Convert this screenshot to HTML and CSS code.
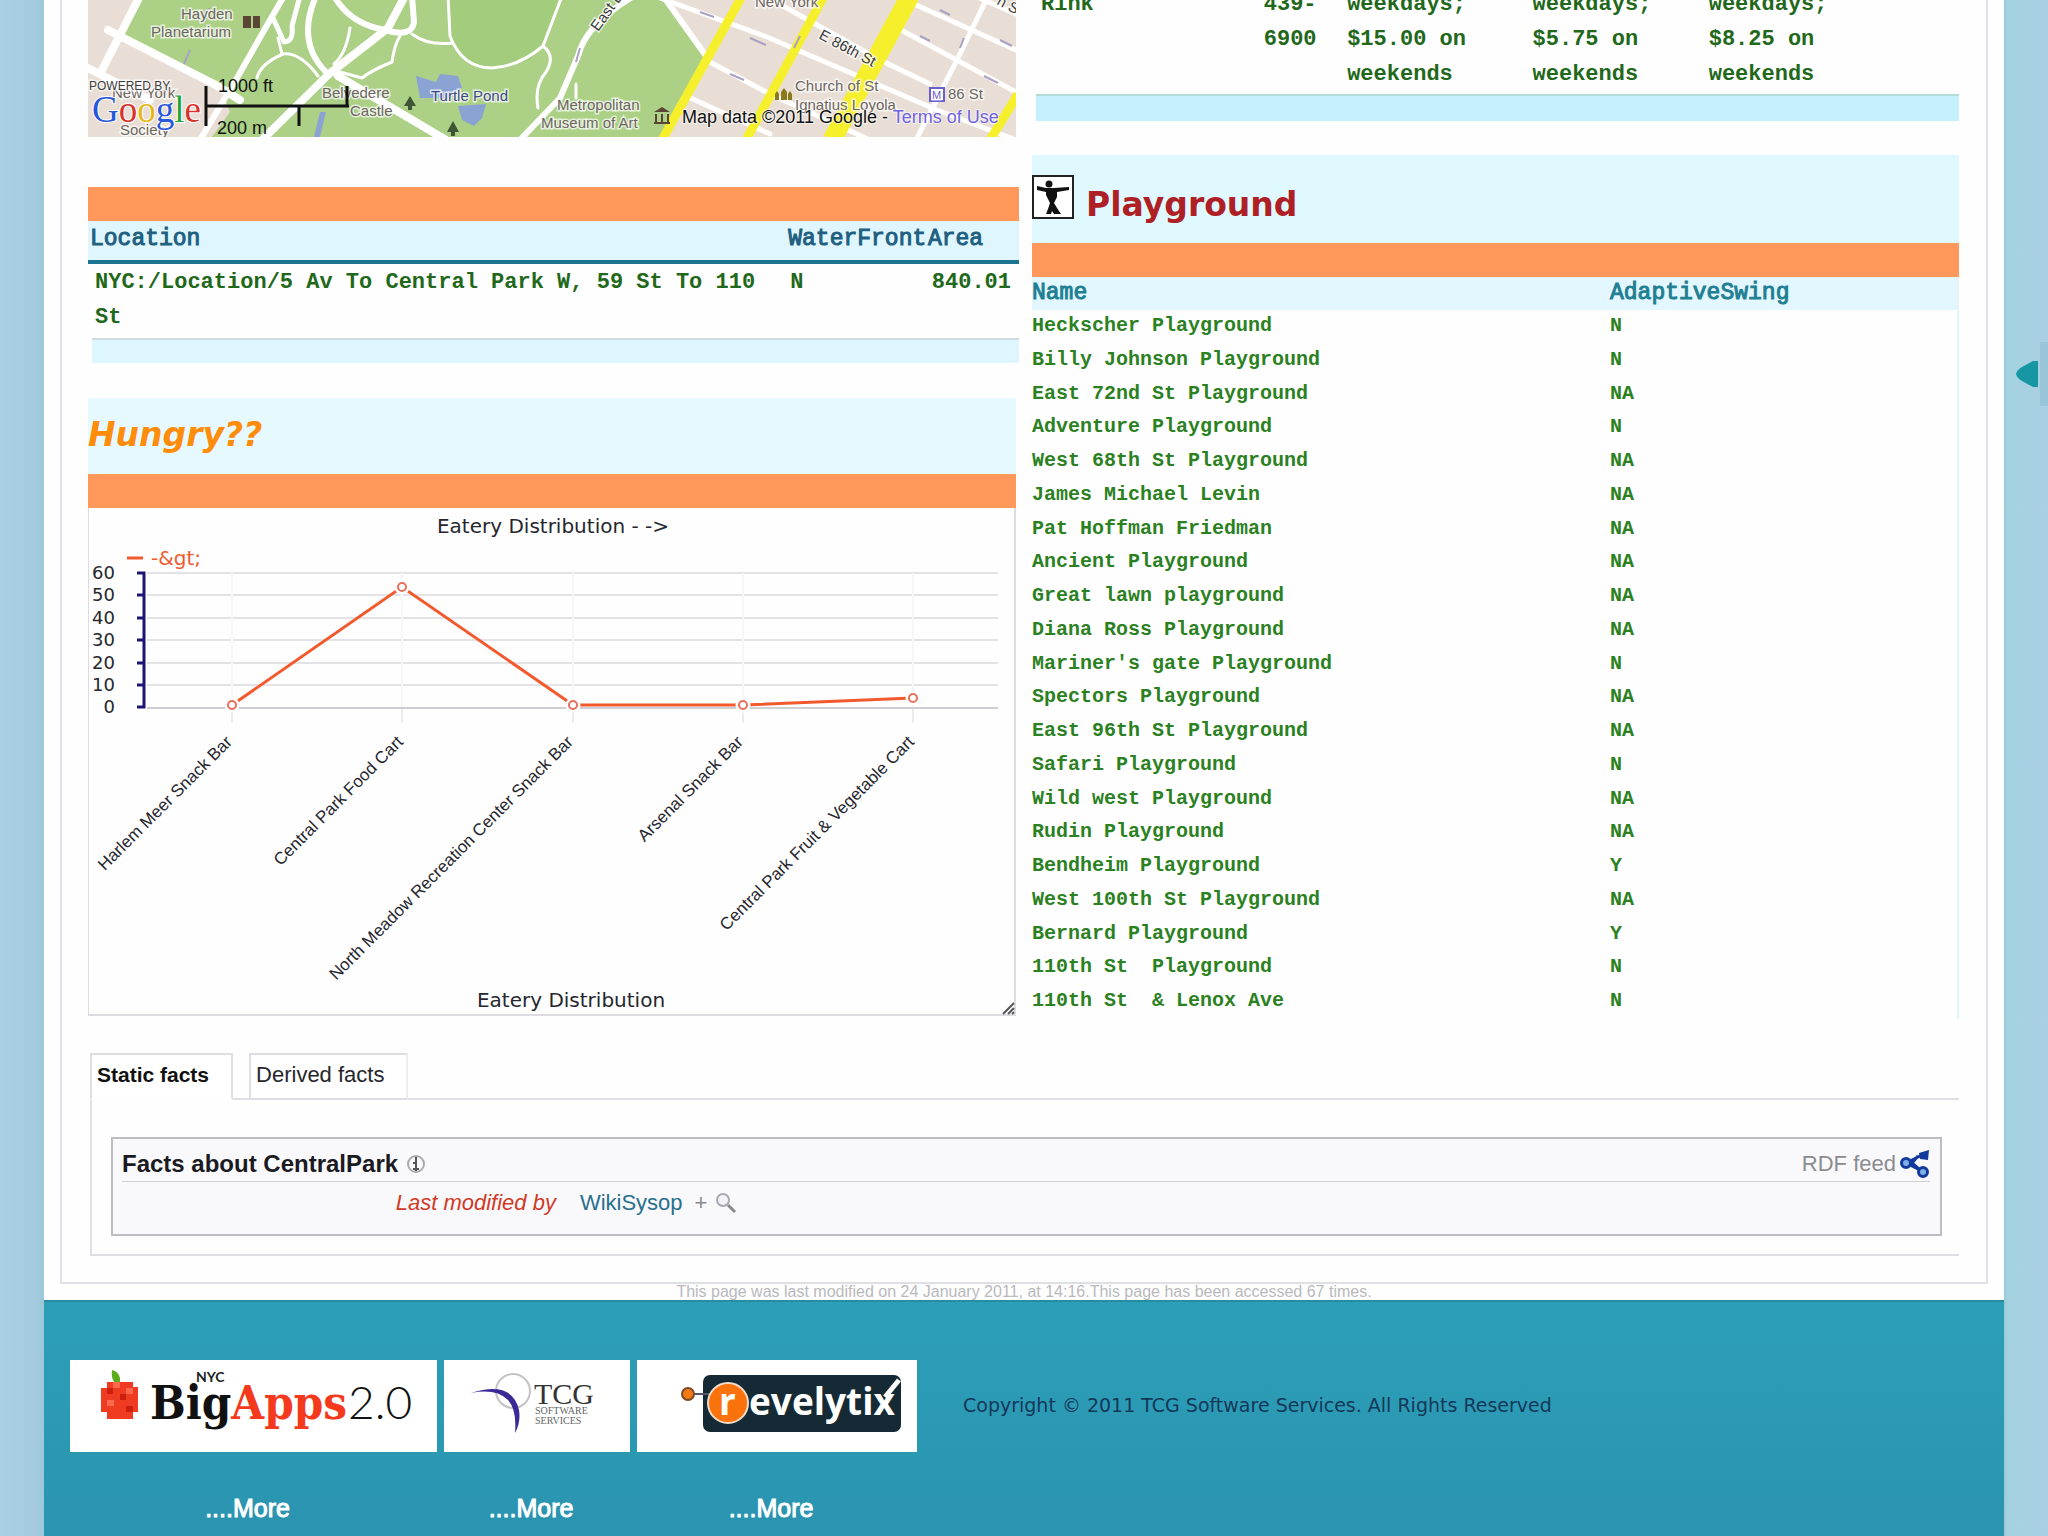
FILE: index.html
```html
<!DOCTYPE html>
<html lang="en">
<head>
<meta charset="utf-8">
<title>CentralPark</title>
<link rel="stylesheet" href="styles.css">
</head>
<body>
<button class="side-toggle" type="button" aria-label="Open side panel">
  <svg width="24" height="28" viewBox="0 0 24 28"><path d="M0 14 Q1 10 6 7 L17 1 H22 V27 H17 L6 21 Q1 18 0 14Z" fill="#1797a3"/></svg>
</button>
<div class="page">
  <main class="frame">
    <div class="columns">
      <div class="col-left">
        <svg class="map" viewBox="88 0 928 137" role="img" aria-label="Map of Central Park">
          <rect x="88" width="928" height="137" fill="#e8ded5"/>
          <path d="M137 0 L116 34 L222 90 L230 112 L212 137 H664 L710 56 L664 0Z" fill="#abd086"/>
          <path d="M448 0 L452 42 L472 66 H505 L530 60 L545 42 L558 0Z" fill="#a3cd7c"/>
          <path d="M416 76 L436 82 L440 74 L458 76 L462 88 L450 98 L420 98Z M458 106 L486 104 L482 118 L474 126 L462 120Z M314 137 L320 112 L326 112 L320 137Z" fill="#8ba3d3"/>
          <g fill="none" stroke="#fff" stroke-linecap="round" stroke-linejoin="round">
            <path stroke-width="8" d="M140 -4 L102 70 M108 30 L214 84 L240 100 M88 68 L150 100 M405 -4 L388 28 L329 74 L262 140 M338 76 L446 140"/>
            <path stroke-width="6" d="M284 -4 L262 34 L237 78 L200 140 M316 -4 Q296 42 326 72 M334 -4 Q350 24 385 30 Q412 38 414 22 L412 -4 M634 -4 Q586 24 578 56 L560 98 L520 140 M666 0 L706 56"/>
            <path stroke-width="5" d="M272 16 L284 42 Q294 42 292 26 L300 -4"/>
            <path stroke-width="3" d="M412 34 Q428 46 453 43 M448 -4 L450 36 Q462 68 492 68 Q520 66 543 46 L562 -4 M543 46 Q556 56 546 72 Q534 86 538 108 M257 78 Q260 64 283 54 Q300 52 318 76 M350 28 Q346 54 334 64 M400 36 Q394 46 392 62 Q372 70 362 78 L340 72 M576 98 V84 M282 54 L278 38"/>
            <path stroke-width="5" d="M660 -2 L767 37 L937 110 L1016 140 M706 60 L770 94 L870 140 M765 -4 L880 60 L930 84 M890 24 L1016 92 M905 0 L1016 50 M975 -4 L1016 14 M686 96 L770 134"/>
            <path stroke-width="5" d="M988 -4 L958 58 L918 136"/>
          </g>
          <g fill="none" stroke="#f6f02c">
            <path stroke-width="9" d="M742 -4 L662 140 M824 -4 L746 140 M1018 94 L990 140"/>
            <path stroke-width="19" d="M910 -4 L832 140"/>
          </g>
          <g fill="none" stroke="#a9a2c4" stroke-width="2">
            <path d="M209 8 l-5 14 M190 50 l-6 14 M580 48 l-4 14 M700 12 l14 5 M750 38 l16 7 M730 74 l14 6 M920 36 l10 5 M940 10 l10 5 M800 36 l-6 12 M964 38 l-4 10 M984 76 l14 7 M1000 40 l12 6"/>
          </g>
          <g fill="#3f5636"><path d="M410 96 l6 10 h-4 v4 h-4 v-4 h-4z M453 121 l6 11 h-4 v4 h-4 v-4 h-4z"/></g>
          <g fill="#5b4636"><path d="M243 16 h8 v12 h-8z M253 16 h7 v12 h-7z"/><path d="M654 112 l8 -5 l8 5z M655 114 h2 v8 h-2z M661 114 h2 v8 h-2z M667 114 h2 v8 h-2z M654 122 h16 v2 h-16z"/></g>
          <path d="M775 100 v-6 l2 -3 l2 3 v6z M781 100 v-8 l3 -4 l3 4 v8z M788 100 v-6 l2 -3 l2 3 v6z" fill="#8a7a1a"/>
          <path d="M930 88 h14 v13 h-14z" fill="#fff" stroke="#6a5fd0" stroke-width="2"/>
          <text class="m-label m-blue" x="932" y="99" font-size="11">M</text>
          <g class="m-label" font-size="15">
            <text x="181" y="19">Hayden</text><text x="151" y="37">Planetarium</text>
            <text x="322" y="98">Belvedere</text><text x="350" y="116">Castle</text>
            <text class="m-navy" x="431" y="101">Turtle Pond</text>
            <text x="557" y="110">Metropolitan</text><text x="541" y="128">Museum of Art</text>
            <text x="755" y="7">New York</text>
            <text x="795" y="91">Church of St</text><text x="795" y="110">Ignatius Loyola</text>
            <text x="948" y="99">86 St</text>
            <text x="112" y="98">New York</text><text x="120" y="135">Society</text>
            <text class="m-dark" transform="translate(818 38) rotate(28)">E 86th St</text>
            <text class="m-dark" transform="translate(598 32) rotate(-54)">East Dr</text>
            <text class="m-dark" transform="translate(996 4) rotate(28)">h St</text>
          </g>
          <text class="m-label m-dark" x="89" y="90" font-size="12">POWERED BY</text>
          <g class="m-google"><text x="92" y="122"><tspan fill="#2b57d9">G</tspan><tspan fill="#d8332b">o</tspan><tspan fill="#e5b91c">o</tspan><tspan fill="#2b57d9">g</tspan><tspan fill="#26a337">l</tspan><tspan fill="#d8332b">e</tspan></text></g>
          <path d="M206 86 V126 M206 106 H349 M347 86 V106 M299 106 V126" fill="none" stroke="#111" stroke-width="3"/>
          <g class="m-scale"><text x="218" y="92">1000 ft</text><text x="217" y="134">200 m</text></g>
          <g class="m-credit"><text x="682" y="123">Map data ©2011 Google - <tspan fill="#7064e0">Terms of Use</tspan></text></g>
        </svg>

        <section class="block location">
          <div class="bar"></div>
          <table class="data location-table">
            <colgroup><col class="c-loc"><col class="c-water"><col></colgroup>
            <thead><tr><th>Location</th><th>WaterFront</th><th>Area</th></tr></thead>
            <tbody><tr><td>NYC:/Location/5 Av To Central Park W, 59 St To 110 St</td><td>N</td><td class="num">840.01</td></tr></tbody>
          </table>
          <div class="band"></div>
        </section>

        <section class="hungry">
          <h2 class="hungry-title">Hungry??</h2>
          <div class="bar"></div>
          <svg class="chart" viewBox="88 507 928 508" role="img" aria-label="Eatery Distribution">
            <path d="M88 507 V1014 H1015 V507" fill="none" stroke="#dcdce2" stroke-width="2"/>
            <g stroke="#e3e3e6" stroke-width="2">
              <path d="M147 572 H998 M147 594 H998 M147 617 H998 M147 639 H998 M147 662 H998 M147 684 H998"/>
              <path d="M232 707 V722 M402 707 V722 M573 707 V722 M743 707 V722 M913 707 V722" stroke="#ececef"/>
              <path d="M232 572 V707 M402 572 V707 M573 572 V707 M743 572 V707 M913 572 V707" stroke="#f8f6f7"/>
              <path d="M147 707 H998" stroke="#cfcfd3"/>
            </g>
            <path d="M137 572 H144 V706 H137 M137 594 H144 M137 617 H144 M137 639 H144 M137 662 H144 M137 684 H144" fill="none" stroke="#1c1577" stroke-width="3"/>
            <path d="M232 704 L402 586 L573 704 L743 704 L913 697" fill="none" stroke="#f25a2e" stroke-width="3"/>
            <path d="M127 557 H143" stroke="#f25a2e" stroke-width="3"/>
            <g fill="#fff" stroke="#fff" stroke-width="5"><circle cx="232" cy="704" r="5"/><circle cx="402" cy="586" r="5"/><circle cx="573" cy="704" r="5"/><circle cx="743" cy="704" r="5"/><circle cx="913" cy="697" r="5"/></g>
            <g fill="#fff" stroke="#e8705a" stroke-width="2"><circle cx="232" cy="704" r="4"/><circle cx="402" cy="586" r="4"/><circle cx="573" cy="704" r="4"/><circle cx="743" cy="704" r="4"/><circle cx="913" cy="697" r="4"/></g>
            <g class="ch-title" text-anchor="middle"><text x="553" y="532">Eatery Distribution - -&gt;</text><text x="571" y="1006">Eatery Distribution</text></g>
            <text class="ch-legend" x="151" y="564">-&amp;gt;</text>
            <g class="ch-axis" text-anchor="end">
              <text x="115" y="578">60</text><text x="115" y="600">50</text><text x="115" y="623">40</text><text x="115" y="645">30</text><text x="115" y="668">20</text><text x="115" y="690">10</text><text x="115" y="712">0</text>
            </g>
            <g class="ch-names" text-anchor="end">
              <text transform="translate(233 742) rotate(-45)">Harlem Meer Snack Bar</text>
              <text transform="translate(404 742) rotate(-45)">Central Park Food Cart</text>
              <text transform="translate(574 742) rotate(-45)">North Meadow Recreation Center Snack Bar</text>
              <text transform="translate(744 742) rotate(-45)">Arsenal Snack Bar</text>
              <text transform="translate(915 742) rotate(-45)">Central Park Fruit &amp; Vegetable Cart</text>
            </g>
            <path d="M1003 1013 L1014 1002 M1008 1013 L1014 1007 M1012 1013 L1014 1011" stroke="#555" stroke-width="2"/>
          </svg>
        </section>
      </div>

      <div class="col-right">
        <section class="rinks">
          <table class="data rink-table">
            <colgroup><col class="c-rink"><col class="c-phone"><col class="c-fee"><col class="c-fee2"><col></colgroup>
            <tbody><tr><td>Rink</td><td>439-<br>6900</td><td>weekdays;<br>$15.00 on<br>weekends</td><td>weekdays;<br>$5.75 on<br>weekends</td><td>weekdays;<br>$8.25 on<br>weekends</td></tr></tbody>
          </table>
          <div class="band band-strong"></div>
        </section>

        <section class="playground">
          <h2 class="play-title">
            <svg width="42" height="44" viewBox="0 0 42 44" aria-hidden="true"><rect x="1" y="1" width="40" height="42" fill="#fff" stroke="#222" stroke-width="2"/><circle cx="17" cy="9" r="3.5" fill="#111"/><path d="M5 11 L14 13 L22 13 L37 12 V15 L25 17 L25 22 L22 28 L25 33 L29 39 H22 L20 36 L19 39 H14 L16 34 L18 28 L14 20 L14 17 L5 15Z" fill="#111"/></svg>
            <span>Playground</span>
          </h2>
          <div class="bar"></div>
          <table class="play-table">
            <colgroup><col class="c-name"><col></colgroup>
            <thead><tr><th>Name</th><th>AdaptiveSwing</th></tr></thead>
            <tbody>
              <tr><td>Heckscher Playground</td><td>N</td></tr>
              <tr><td>Billy Johnson Playground</td><td>N</td></tr>
              <tr><td>East 72nd St Playground</td><td>NA</td></tr>
              <tr><td>Adventure Playground</td><td>N</td></tr>
              <tr><td>West 68th St Playground</td><td>NA</td></tr>
              <tr><td>James Michael Levin</td><td>NA</td></tr>
              <tr><td>Pat Hoffman Friedman</td><td>NA</td></tr>
              <tr><td>Ancient Playground</td><td>NA</td></tr>
              <tr><td>Great lawn playground</td><td>NA</td></tr>
              <tr><td>Diana Ross Playground</td><td>NA</td></tr>
              <tr><td>Mariner's gate Playground</td><td>N</td></tr>
              <tr><td>Spectors Playground</td><td>NA</td></tr>
              <tr><td>East 96th St Playground</td><td>NA</td></tr>
              <tr><td>Safari Playground</td><td>N</td></tr>
              <tr><td>Wild west Playground</td><td>NA</td></tr>
              <tr><td>Rudin Playground</td><td>NA</td></tr>
              <tr><td>Bendheim Playground</td><td>Y</td></tr>
              <tr><td>West 100th St Playground</td><td>NA</td></tr>
              <tr><td>Bernard Playground</td><td>Y</td></tr>
              <tr><td>110th St&nbsp; Playground</td><td>N</td></tr>
              <tr><td>110th St&nbsp; &amp; Lenox Ave</td><td>N</td></tr>
            </tbody>
          </table>
        </section>
      </div>
    </div>

    <section class="facts">
      <div class="tabs" role="tablist">
        <button class="tab tab-on" type="button" role="tab" aria-selected="true">Static facts</button>
        <span class="tab-gap"></span>
        <button class="tab tab-off" type="button" role="tab" aria-selected="false">Derived facts</button>
        <span class="tab-rest"></span>
      </div>
      <div class="panel">
        <div class="factbox">
          <div class="fact-head">
            <h3>Facts about CentralPark</h3>
            <svg width="20" height="20" viewBox="0 0 20 20" aria-hidden="true"><circle cx="10" cy="10" r="8" fill="none" stroke="#aaa" stroke-width="2"/><path d="M10 3 V17 M7 9 H10 M7 15 H13" stroke="#555" stroke-width="2"/></svg>
            <a class="rdf" href="#rdf">RDF feed
              <svg width="30" height="28" viewBox="0 0 30 28" aria-hidden="true"><path d="M6 13 L24 4 M6 13 L24 22 M18 6 L12 13 L20 20" fill="none" stroke="#123a9c" stroke-width="3"/><circle cx="6" cy="13" r="4.5" fill="#7fb0e8" stroke="#123a9c" stroke-width="3"/><path d="M19 3 L29 0 L28 10 L20 9Z" fill="#123a9c"/><circle cx="23" cy="22" r="4.5" fill="#7fb0e8" stroke="#123a9c" stroke-width="3"/></svg>
            </a>
          </div>
          <div class="fact-row">
            <span class="fact-key">Last modified by</span>
            <a class="fact-val" href="#user">WikiSysop</a>
            <span class="plus">+</span>
            <svg width="22" height="22" viewBox="0 0 22 22" aria-hidden="true"><circle cx="8" cy="8" r="6" fill="#f4f4f8" stroke="#a9a9b4" stroke-width="2"/><path d="M13 13 L20 20" stroke="#888" stroke-width="3"/></svg>
          </div>
        </div>
      </div>
    </section>
  </main>
  <p class="modified">This page was last modified on 24 January 2011, at 14:16.This page has been accessed 67 times.</p>

  <footer class="footer">
    <div class="sponsor sponsor-big">
      <a class="logo" href="#bigapps" aria-label="NYC BigApps 2.0">
        <svg width="367" height="92" viewBox="70 1360 367 92">
          <path d="M112 1370 q6 1 8 8 v4 h-6 q-3 -5 -2 -12z" fill="#5cad1c"/>
          <path d="M107 1382 H133 V1387 H138 V1412 H133 V1419 H107 V1412 H101 V1388 H107Z" fill="#ee3b22"/>
          <path d="M113 1382 h7 v6 h-7z M126 1388 h7 v6 h-7z M107 1400 h7 v6 h-7z" fill="#f9694c"/><path d="M120 1394 h6 v6 h-6z M126 1406 h7 v6 h-7z M107 1388 h6 v6 h-6z" fill="#cc1f10"/>
          <text class="lg-slab" x="150" y="1419">Big<tspan fill="#f5391c">Apps</tspan></text>
          <text class="lg-nyc" x="196" y="1382">NYC</text>
          <text class="lg-two" x="348" y="1419">2.0</text>
        </svg>
      </a>
      <a class="more" href="#more1">....More</a>
    </div>
    <div class="sponsor">
      <a class="logo" href="#tcg" aria-label="TCG Software Services">
        <svg width="186" height="92" viewBox="444 1360 186 92">
          <circle cx="513" cy="1391" r="17" fill="none" stroke="#c3c3c8" stroke-width="2"/>
          <path d="M471 1393 Q512 1380 519 1410 Q521 1422 515 1433 Q517 1410 508 1400 Q496 1388 471 1393Z" fill="#3b2a96"/>
          <text class="lg-tcg" x="534" y="1404">TCG</text>
          <text class="lg-soft" x="535" y="1414">SOFTWARE</text><text class="lg-soft" x="535" y="1424">SERVICES</text>
        </svg>
      </a>
      <a class="more" href="#more2">....More</a>
    </div>
    <div class="sponsor">
      <a class="logo" href="#revelytix" aria-label="revelytix">
        <svg width="280" height="92" viewBox="636 1360 280 92">
          <rect x="702" y="1375" width="198" height="57" rx="7" fill="#152a35"/>
          <path d="M692 1394 H714" stroke="#556" stroke-width="2"/>
          <circle cx="687" cy="1394" r="6" fill="#f47a16" stroke="#7a4a28" stroke-width="2"/>
          <circle cx="727" cy="1403" r="20" fill="#f9720c" stroke="#f2dccb" stroke-width="2"/>
          <text class="lg-rev" x="718" y="1415">r</text>
          <text class="lg-rev" x="748" y="1415">evelytix</text>
          <path d="M884 1397 L898 1380" stroke="#fff" stroke-width="5"/>
        </svg>
      </a>
      <a class="more" href="#more3">....More</a>
    </div>
    <p class="copyright">Copyright © 2011 TCG Software Services. All Rights Reserved</p>
  </footer>
</div>
</body>
</html>
```
FILE: styles.css
```css
* { box-sizing: border-box; }
body {
  margin: 0;
  background: linear-gradient(to right, #abd0e4 0, #a6cbdf 32px, #9cc8da 44px, #9cc8da calc(100% - 44px), #a4d2e1 calc(100% - 40px), #aacfe2 100%);
  font-family: "Liberation Sans", Arial, sans-serif;
  font-size: 22px;
  color: #1b1b1f;
}
h2, h3, p { margin: 0; }
a { text-decoration: none; color: inherit; }
svg { display: block; }

.page { margin: 0 44px; background: #fefefe; }
.frame { margin: 0 16px; padding: 0 27px 26px 26px; border: solid #dfe0e6; border-width: 0 2px 2px; }
.columns { display: grid; grid-template-columns: 931fr 927fr; column-gap: 13px; overflow: hidden; }
.col-left, .col-right { min-width: 0; }

.bar { height: 34px; background: #ff985a; }
.band { height: 25px; margin-left: 4px; background: #def6ff; border-top: 2px solid #cfdde0; }
.band-strong { height: 27px; background: #c6f0fd; border-top-color: #b4dcd6; }

.map { width: 928px; max-width: 100%; height: auto; }
.map text { font-family: "Liberation Sans", Arial, sans-serif; }
.m-label { fill: #6d6660; stroke: #fff; stroke-width: 3px; stroke-opacity: .7; paint-order: stroke; }
.m-label .m-dark, .m-dark { fill: #3c3c3c; }
.m-label .m-navy { fill: #3b4a86; }
.m-blue { fill: #6a5fd0; }
.map .m-google text { font-family: "Liberation Serif", "Times New Roman", serif; font-size: 37px; stroke: #fff; stroke-width: 2px; paint-order: stroke; }
.m-scale text { font-size: 18px; fill: #111; }
.m-credit text { font-size: 18px; fill: #111; stroke: #fff; stroke-width: 2px; stroke-opacity: .6; paint-order: stroke; }

.location { margin-top: 50px; }
table { width: 100%; border-collapse: collapse; table-layout: fixed; font-family: "Liberation Mono", "Courier New", monospace; }
th, td { padding: 0; text-align: left; vertical-align: top; }
.data td { font-size: 22px; line-height: 35px; font-weight: 700; color: #22681a; }
.location-table th { height: 41px; padding-left: 2px; font-size: 23px; line-height: 36px; font-weight: 400; color: #205f80; background: #e0f6ff; border-bottom: 4px solid #1b7391; -webkit-text-stroke: 1px #205f80; }
.location-table td { padding: 1px 0 3px 4px; }
.location-table td:first-child { padding-left: 7px; }
.location-table td.num { padding-right: 8px; text-align: right; }
.c-loc { width: 75%; }
.c-water { width: 15%; }

.hungry { width: 928px; max-width: 100%; margin-top: 35px; }
.hungry-title { padding: 17px 0 19px; background: #e6f9ff; color: #ff8c0a; font: italic 700 33px/40px "DejaVu Sans", Verdana, sans-serif; }
.chart { width: 100%; height: auto; }
.chart text { font-family: "DejaVu Sans", Verdana, sans-serif; font-size: 20px; fill: #26262e; }
.chart .ch-axis text { font-size: 18px; }
.chart .ch-legend { fill: #f25a2e; }
.chart .ch-names text { font-family: "Liberation Sans", Arial, sans-serif; font-size: 17px; }

.rinks { margin-top: -13px; padding-bottom: 34px; }
.rink-table td { padding-bottom: 2px; }
.rink-table td:first-child { padding-left: 9px; }
.c-rink { width: 25%; }
.c-phone { width: 9%; }
.c-fee { width: 20%; }
.c-fee2 { width: 19%; }

.play-title { display: flex; align-items: flex-start; gap: 12px; padding: 20px 0 24px; background: #e0f8ff; color: #ae1f26; font: 700 33px/44px "DejaVu Sans", Verdana, sans-serif; }
.play-title span { padding-top: 8px; line-height: 44px; margin-bottom: -8px; }
.play-table { height: 742px; border-right: 2px solid #e3f5fa; }
.play-table th { height: 33px; font-size: 23px; line-height: 32px; font-weight: 400; color: #1f7f93; background: #e2f7ff; -webkit-text-stroke: 1px #1f7f93; }
.play-table td { font-size: 20px; line-height: 32px; font-weight: 700; color: #2b811f; }
.c-name { width: 578px; }

.facts { margin-top: 34px; }
.tabs { display: flex; padding-left: 2px; }
.tab { height: 47px; margin: 0; padding: 0 22px 4px 5px; border: 2px solid #dedee4; background: #fff; font: 22px "Liberation Sans", Arial, sans-serif; color: #26262c; }
.tab-on { border-bottom-color: #fff; font-size: 21px; font-weight: 700; color: #111; }
.tab-off { border-right-color: #eeeef2; }
.tab-gap, .tab-rest { border-bottom: 2px solid #dedee4; }
.tab-gap { width: 16px; }
.tab-rest { flex: 1; }
.panel { margin-left: 2px; padding: 37px 17px 18px 19px; border: solid #dedee4; border-width: 0 0 2px 2px; }
.factbox { padding: 7px 10px 10px 9px; border: 2px solid #bcbcc2; background: #f9f9fc; }
.fact-head { display: flex; align-items: center; gap: 8px; height: 36px; border-bottom: 1px solid #cfcfd4; }
.fact-head h3 { font-size: 24px; line-height: 32px; }
.rdf { display: flex; align-items: center; gap: 4px; margin-left: auto; color: #8c8c90; }
.fact-row { display: flex; align-items: center; height: 42px; }
.fact-key { width: 24%; text-align: right; font-style: italic; color: #d03a26; }
.fact-val { margin-left: 24px; color: #28708c; }
.plus { margin: 0 8px 0 12px; color: #888; }

.modified { height: 16px; text-align: center; font-size: 16px; line-height: 16px; color: #b9b9bd; }

.footer { display: flex; align-items: flex-start; gap: 7px; min-height: 237px; padding: 58px 26px 12px; background: linear-gradient(#2c9fb7, #2b94b0); border-top: 2px solid #258ca2; }
.sponsor { display: flex; flex-direction: column; align-items: center; }
.logo { display: block; background: #fff; }
.more { margin: 40px 12px 0 0; color: #fff; font-size: 25px; line-height: 32px; -webkit-text-stroke: 1px #fff; }
.copyright { margin: 32px 0 0 39px; font: 19px/26px "DejaVu Sans", Verdana, sans-serif; color: #12385a; }
.lg-slab { font: 700 47px "DejaVu Serif Condensed", "DejaVu Serif", serif; fill: #111; }
.lg-nyc { font: 700 14px "Lato", sans-serif; fill: #222; }
.lg-two { font: 300 46px "Lato", sans-serif; fill: #111; }
.lg-tcg { font: 30px "Liberation Serif", serif; fill: #333; }
.lg-soft { font: 10px "Liberation Serif", serif; fill: #666; }
.lg-rev { font: 700 37px "Open Sans", sans-serif; fill: #fff; }

.side-toggle { position: absolute; top: 342px; right: 0; width: 32px; height: 64px; padding: 0; border: 0; background: linear-gradient(to right, transparent 24px, #98c5d8 24px); }
```
